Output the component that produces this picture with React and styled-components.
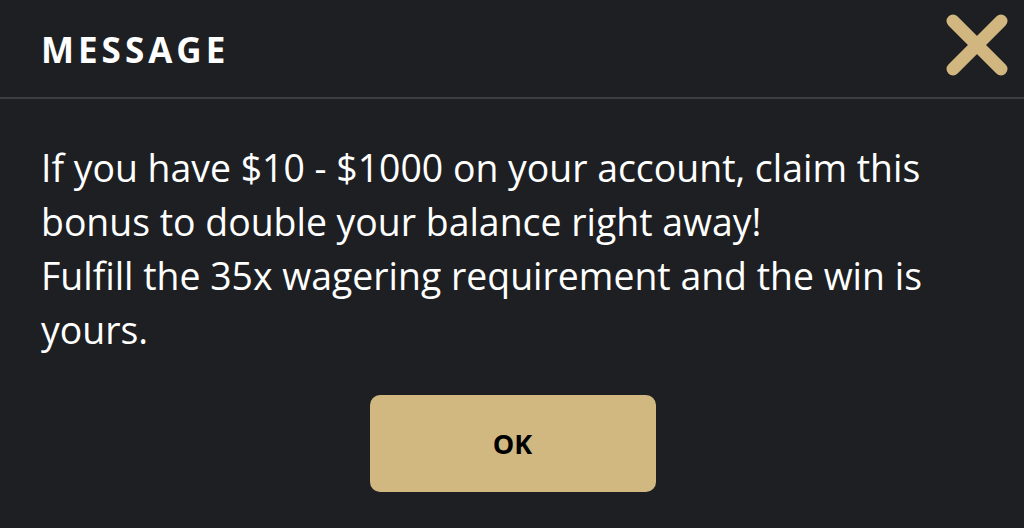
import styled, { createGlobalStyle } from 'styled-components'

const Global = createGlobalStyle`
    html, body { margin: 0; padding: 0; background: #1e1f22; }
    body { font-family: "Open Sans", "Liberation Sans", sans-serif; }
`

const Dialog = styled.div`
    width: 1024px;
    height: 528px;
    background: #1e1f22;
    display: flex;
    flex-direction: column;
    overflow: hidden;
`
const Header = styled.div`
    height: 99px;
    border-bottom: 2px solid #3a3d42;
    display: flex;
    align-items: center;
    justify-content: space-between;
    padding: 0 16px 0 41px;
    box-sizing: border-box;
`
const Title = styled.h1`
    margin: 0;
    color: #fff;
    font-size: 35px;
    font-weight: 700;
    letter-spacing: 4px;
    margin-top: 2px;
`
const Close = styled.button`
    width: 62px;
    height: 62px;
    padding: 0;
    border: none;
    background: none;
    cursor: pointer;
    margin-top: -8px;
    display: flex;
`
const Body = styled.div`
    padding: 42px 41px 0;
`
const Text = styled.p`
    margin: 0;
    color: #fff;
    font-size: 37.4px;
    line-height: 54px;
    width: 930px;
`
const Actions = styled.div`
    display: flex;
    justify-content: center;
    margin-top: 38px;
`
const OkBtn = styled.button`
    width: 286px;
    height: 97px;
    border: none;
    border-radius: 10px;
    background: #d0b880;
    color: #000;
    font-family: "Open Sans", "Liberation Sans", sans-serif;
    font-weight: 700;
    font-size: 27px;
    cursor: pointer;
    margin-left: 1px;
`

export default function App(){
    return (
        <Dialog>
            <Global/>
            <Header>
                <Title>MESSAGE</Title>
                <Close aria-label="close">
                    <svg width="62" height="62" viewBox="0 0 62 62">
                        <path d="M7 7 L55 55 M55 7 L7 55" stroke="#d1b77f" strokeWidth="13" strokeLinecap="round"/>
                    </svg>
                </Close>
            </Header>
            <Body>
                <Text>
                    If you have $10 - $1000 on your account, claim this bonus to double your balance right away!
                    <br/>
                    Fulfill the 35x wagering requirement and the win is yours.
                </Text>
                <Actions>
                    <OkBtn>OK</OkBtn>
                </Actions>
            </Body>
        </Dialog>
    )
}
